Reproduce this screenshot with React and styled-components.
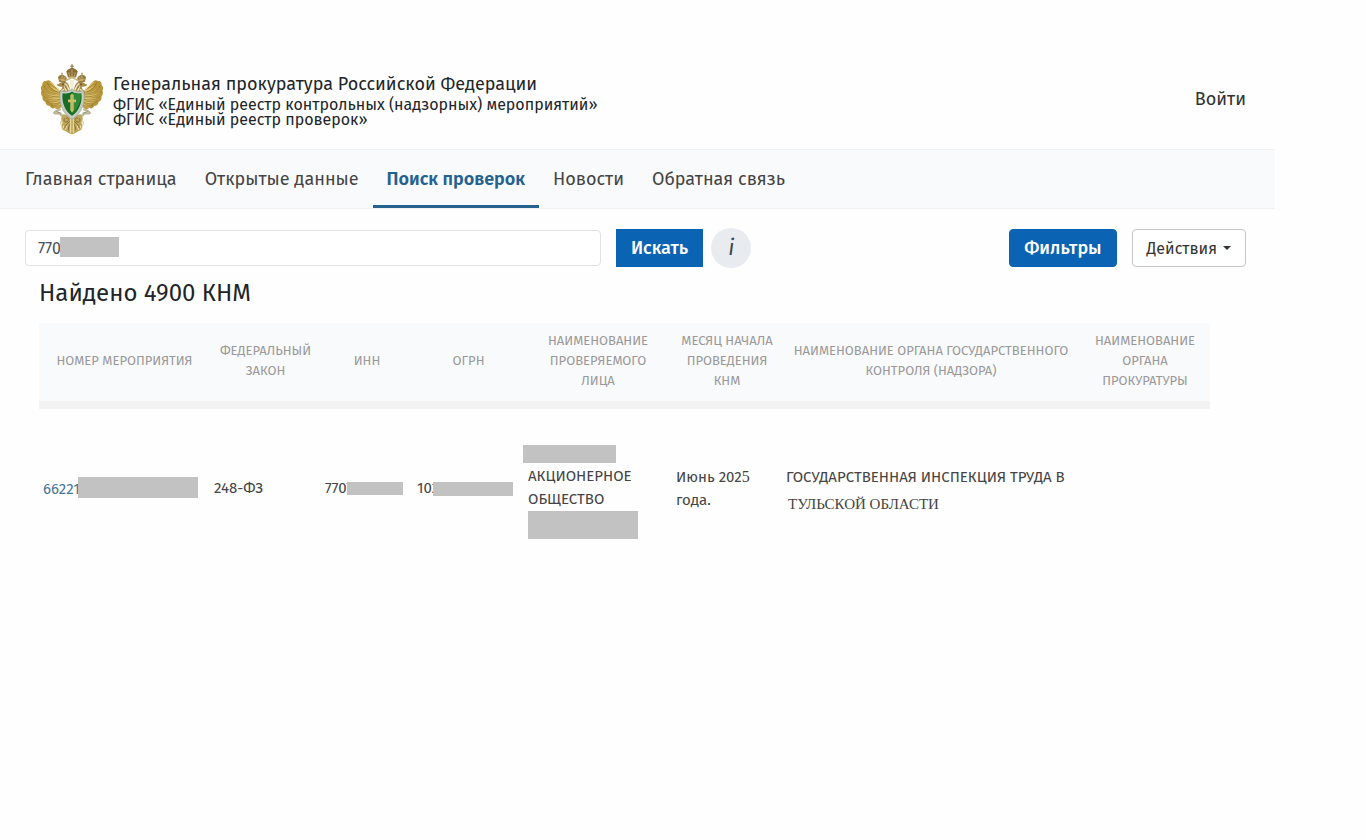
import React, { useState } from 'react';
import styled, { createGlobalStyle } from 'styled-components';

const GlobalStyle = createGlobalStyle`
  * {
    box-sizing: border-box;
  }

  body {
    margin: 0;
    background-color: #fefefe;
    color: #212529;
    font-family: 'Fira Sans', 'Noto Sans', 'Open Sans', sans-serif;
    font-size: 16px;
  }
`;

const Page = styled.div`
  margin-right: 91px;
  padding-top: 48px;
`;

const Header = styled.header`
  display: flex;
  align-items: center;
  height: 101px;
  padding: 0 29px 0 40px;
`;

const Titles = styled.div`
  flex: 1;
  margin-left: 9px;
`;

const Title = styled.h1`
  margin: 0;
  font-size: 18px;
  font-weight: 400;
  line-height: 26px;
`;

const Subtitle = styled.p`
  margin: 0;
  font-size: 16px;
  line-height: 15px;
`;

const LoginLink = styled.a`
  color: #333;
  font-size: 18px;
  text-decoration: none;
`;

const Nav = styled.nav`
  display: flex;
  height: 60px;
  padding: 0 11px;
  background-color: #f9fafc;
  border-top: 1px solid #f0f1f3;
  border-bottom: 1px solid #f0f1f3;
`;

const NavLink = styled.a`
  display: flex;
  align-items: center;
  padding: 3px 14px 0;
  border-bottom: 3px solid ${props => (props.$active ? '#25628f' : 'transparent')};
  color: ${props => (props.$active ? '#25628f' : '#444')};
  font-size: 18px;
  font-weight: ${props => (props.$active ? 600 : 400)};
  text-decoration: none;
  white-space: nowrap;
`;

const Toolbar = styled.form`
  display: flex;
  align-items: center;
  height: 40px;
  margin-top: 19px;
  padding: 0 29px 0 25px;
`;

const SearchBox = styled.div`
  position: relative;
  flex: 0 1 576px;
  margin-right: 15px;
`;

const SearchInput = styled.input`
  display: block;
  width: 100%;
  height: 36px;
  padding: 0 12px;
  border: 1px solid #e2e3e5;
  border-radius: 4px;
  background-color: #fff;
  color: #495057;
  font-family: inherit;
  font-size: 16px;
`;

const InputMask = styled.span`
  position: absolute;
  top: 7px;
  left: 35px;
  width: 59px;
  height: 20px;
  background-color: #c2c2c2;
`;

const Button = styled.button`
  height: 38px;
  padding: 0 14px;
  border: 1px solid ${props => (props.$outline ? '#c4c6c8' : '#0b63b3')};
  border-radius: ${props => (props.$square ? '0' : '4px')};
  background-color: ${props => (props.$outline ? '#fff' : '#0b63b3')};
  color: ${props => (props.$outline ? '#333' : '#fff')};
  font-family: inherit;
  font-size: ${props => (props.$outline ? '16px' : '18px')};
  font-weight: ${props => (props.$outline ? 400 : 500)};
  white-space: nowrap;
  cursor: pointer;
`;

const InfoButton = styled.button`
  width: 40px;
  height: 40px;
  margin-left: 8px;
  padding: 0;
  border: none;
  border-radius: 50%;
  background-color: #e8ebf0;
  color: #3d4650;
  font-family: inherit;
  font-size: 22px;
  font-style: italic;
  line-height: 38px;
  cursor: pointer;
`;

const Actions = styled.div`
  display: flex;
  gap: 15px;
  margin-left: auto;
`;

const Caret = styled.span`
  display: inline-block;
  margin-left: 6px;
  border-top: 4px solid #333;
  border-right: 4px solid transparent;
  border-left: 4px solid transparent;
  vertical-align: 4px;
`;

const Results = styled.main`
  padding: 0 65px 0 39px;
`;

const Found = styled.h2`
  margin: 8px 0 13px;
  font-size: 24px;
  font-weight: 400;
  line-height: 34px;
`;

const Table = styled.table`
  width: 100%;
  border-collapse: separate;
  border-spacing: 0;
  table-layout: fixed;
`;

const Col = styled.col`
  width: ${props => (props.$width ? `${props.$width}px` : 'auto')};
`;

const HeadCell = styled.th`
  height: 86px;
  padding: 0 8px 2px;
  border-bottom: 8px solid #f3f3f3;
  background-color: #f9fafc;
  color: #999;
  font-size: 13px;
  font-weight: 400;
  line-height: 20px;
  text-transform: uppercase;
`;

const Cell = styled.td`
  padding: ${props => (props.$low ? '41px' : '33px')} 4px 33px;
  color: #444;
  font-size: 15px;
  line-height: 23px;
  vertical-align: middle;
`;

const NumberLink = styled.a`
  color: #4a7696;
  text-decoration: none;
`;

const Line = styled.div`
  height: 23px;
  white-space: nowrap;
`;

const Mask = styled.span`
  display: inline-block;
  width: ${props => props.$width}px;
  height: ${props => props.$height}px;
  margin-left: ${props => props.$shift || 0}px;
  background-color: #c2c2c2;
  vertical-align: ${props => props.$align || 'middle'};
`;

const Serif = styled.span`
  padding-left: 2px;
  font-family: 'Liberation Serif', serif;
  font-size: 15px;
  line-height: 30px;
`;

const SerifDigit = styled.span`
  font-family: 'Liberation Serif', serif;
  font-size: 16px;
`;

const COLUMNS = [
  { title: 'Номер мероприятия', width: 171 },
  { title: 'Федеральный закон', width: 111 },
  { title: 'ИНН', width: 92 },
  { title: 'ОГРН', width: 111 },
  { title: 'Наименование проверяемого лица', width: 148 },
  { title: 'Месяц начала проведения КНМ', width: 110 },
  { title: 'Наименование органа государственного контроля (надзора)' },
  { title: 'Наименование органа прокуратуры', width: 130 },
];

const NAV_ITEMS = ['Главная страница', 'Открытые данные', 'Поиск проверок', 'Новости', 'Обратная связь'];

// One half of the eagle, the other half is mirrored
function EagleHalf() {
  return (
    <g>
      <path d="M88 106C78 101 73 88 64 81C58 75 52 75 48 79C40 76 36 86 37 91C31 95 32 104 35 108C31 113 34 123 38 126C36 133 41 140 46 141C46 149 53 154 59 153C62 160 68 163 74 159C79 165 87 163 92 158L100 140Z" fill="#b8963a" />
      <path d="M86 112C77 112 66 105 58 90C69 99 77 103 88 106ZM87 120C72 122 55 114 46 96C60 111 73 114 87 114ZM88 128C71 132 51 126 40 111C57 121 74 122 88 121ZM89 136C73 142 56 139 44 128C60 133 75 131 89 128ZM92 143C80 151 66 151 55 143C72 144 82 140 92 136ZM94 150C87 159 77 160 68 154C82 154 87 148 94 143Z" fill="#dcc36b" />
      <path d="M83 111C70 108 61 99 51 83M86 118C65 116 52 108 41 92M87 126C64 126 50 122 37 109M89 134C69 138 52 135 41 125M92 142C75 149 61 149 49 138M95 149C83 157 70 156 62 149" fill="none" stroke="#87682a" strokeWidth="2" />
      <path d="M61 81C67 89 77 96 88 103" fill="none" stroke="#efe0a0" strokeWidth="3" />
      <path d="M118 112C122 99 116 82 103 80C94 80 88 87 79 90C84 95 92 97 97 95C97 102 91 108 84 112L112 120Z" fill="#a88b4b" />
      <path d="M118 108C114 99 112 90 104 86M110 108C104 104 104 97 103 92M94 109L102 103" fill="none" stroke="#f2e8be" strokeWidth="4" />
      <path d="M98 90C102 91 106 94 108 100" fill="none" stroke="#67501f" strokeWidth="2" />
      <circle cx="99" cy="88" r="2" fill="#453512" />
      <path d="M87 81L84 67C89 60 97 58 102 62C107 64 111 68 110 74L105 84Z" fill="#9b7c3f" />
      <path d="M88 74L107 77M96 62L96 79M103 66L101 78" stroke="#e0cc8e" strokeWidth="2" />
      <path d="M96 53V61M93 57H99" stroke="#a88642" strokeWidth="2" />
      <path d="M92 163C86 166 77 166 73 174C79 179 83 172 90 177C96 184 102 187 108 187" fill="none" stroke="#bcb69b" strokeWidth="7" />
      <path d="M79 170L94 175" stroke="#807859" strokeWidth="2" />
      <path d="M101 178C94 184 90 195 98 203C93 212 93 224 104 228C112 232 119 238 126 238V184Z" fill="#bea75b" />
      <path d="M105 190C97 198 107 206 114 199C119 194 115 187 108 190M120 200C111 206 104 213 105 220M122 207C116 213 114 220 116 227" fill="none" stroke="#8a7036" strokeWidth="3" />
      <path d="M122 192V234M111 213L106 225M101 212L99 221" stroke="#efe3ad" strokeWidth="3" />
      <path d="M97 196C91 201 90 208 95 210" fill="none" stroke="#ded3a7" strokeWidth="4" />
    </g>
  );
}

function Emblem() {
  return (
    <svg width="64" height="72" viewBox="30 25 192 215" role="img" aria-label="Генеральная прокуратура">
      <EagleHalf />
      <g transform="matrix(-1 0 0 1 252 0)">
        <EagleHalf />
      </g>
      <path d="M114 68L109 50C114 42 121 42 126 39C132 42 139 42 143 50L138 68Z" fill="#8b6c34" />
      <path d="M116 52L119 64M126 44V65M136 52L133 64M115 66H137" stroke="#d5c07b" strokeWidth="2" />
      <path d="M126 28V42M121 34H131" stroke="#8b6c34" strokeWidth="3" />
      <path d="M107 77C113 75 117 72 124 69H128C135 72 139 75 145 77" fill="none" stroke="#ccb878" strokeWidth="4" />
      <path d="M119 75H133L130 103L126 109L122 103Z" fill="#f2eed8" />
      <path d="M91 107C105 112 117 110 126 102C135 110 147 112 161 107C168 140 156 176 126 194C96 176 84 140 91 107Z" fill="#c6cbc0" stroke="#98a08e" strokeWidth="2" />
      <path d="M98 115C109 117 118 116 126 110C134 116 143 117 154 115C158 140 148 168 126 183C104 168 94 140 98 115Z" fill="#166d26" />
      <path d="M127 112C136 117 145 118 152 117C154 137 146 160 127 176Z" fill="#2e8a36" />
      <path d="M126 116L131 121V134H138V142H131V166L126 174L121 166V142H114V134H121V121Z" fill="#cfc06c" />
      <path d="M126 119V169" stroke="#89933e" strokeWidth="1" />
    </svg>
  );
}

function App() {
  const [query, setQuery] = useState('770');

  const handleSubmit = (e) => {
    e.preventDefault();
  };

  return (
    <>
      <GlobalStyle />
      <Page>
        <Header>
          <Emblem />
          <Titles>
            <Title>Генеральная прокуратура Российской Федерации</Title>
            <Subtitle>ФГИС «Единый реестр контрольных (надзорных) мероприятий»</Subtitle>
            <Subtitle>ФГИС «Единый реестр проверок»</Subtitle>
          </Titles>
          <LoginLink href="#login">Войти</LoginLink>
        </Header>

        <Nav>
          {NAV_ITEMS.map((item, index) => (
            <NavLink key={item} href={`#section-${index}`} $active={index === 2}>{item}</NavLink>
          ))}
        </Nav>

        <Toolbar onSubmit={handleSubmit}>
          <SearchBox>
            <SearchInput
              type="text"
              aria-label="Поиск"
              value={query}
              onChange={(e) => setQuery(e.target.value)}
            />
            <InputMask />
          </SearchBox>
          <Button type="submit" $square>Искать</Button>
          <InfoButton type="button">i</InfoButton>
          <Actions>
            <Button type="button">Фильтры</Button>
            <Button type="button" $outline>Действия<Caret /></Button>
          </Actions>
        </Toolbar>

        <Results>
          <Found>Найдено 4900 КНМ</Found>
          <Table>
            <colgroup>
              {COLUMNS.map((column) => <Col key={column.title} $width={column.width} />)}
            </colgroup>
            <thead>
              <tr>
                {COLUMNS.map((column) => <HeadCell key={column.title} scope="col">{column.title}</HeadCell>)}
              </tr>
            </thead>
            <tbody>
              <tr>
                <Cell>
                  <Line>
                    <NumberLink href="#event">66221</NumberLink>
                    <Mask $width={120} $height={21} $shift={-2} $align="text-bottom" />
                  </Line>
                </Cell>
                <Cell>248-ФЗ</Cell>
                <Cell><Line>7707<Mask $width={56} $height={13} $shift={-6} /></Line></Cell>
                <Cell><Line>102<Mask $width={80} $height={14} $shift={-6} /></Line></Cell>
                <Cell>
                  <Line><Mask $width={93} $height={18} $shift={-5} /></Line>
                  <Line>АКЦИОНЕРНОЕ</Line>
                  <Line>ОБЩЕСТВО</Line>
                  <Line><Mask $width={110} $height={28} /></Line>
                </Cell>
                <Cell>Июнь 202<SerifDigit>5</SerifDigit> года.</Cell>
                <Cell $low>
                  ГОСУДАРСТВЕННАЯ ИНСПЕКЦИЯ ТРУДА В <Serif>ТУЛЬСКОЙ ОБЛАСТИ</Serif>
                </Cell>
                <Cell />
              </tr>
            </tbody>
          </Table>
        </Results>
      </Page>
    </>
  );
}

export default App;
